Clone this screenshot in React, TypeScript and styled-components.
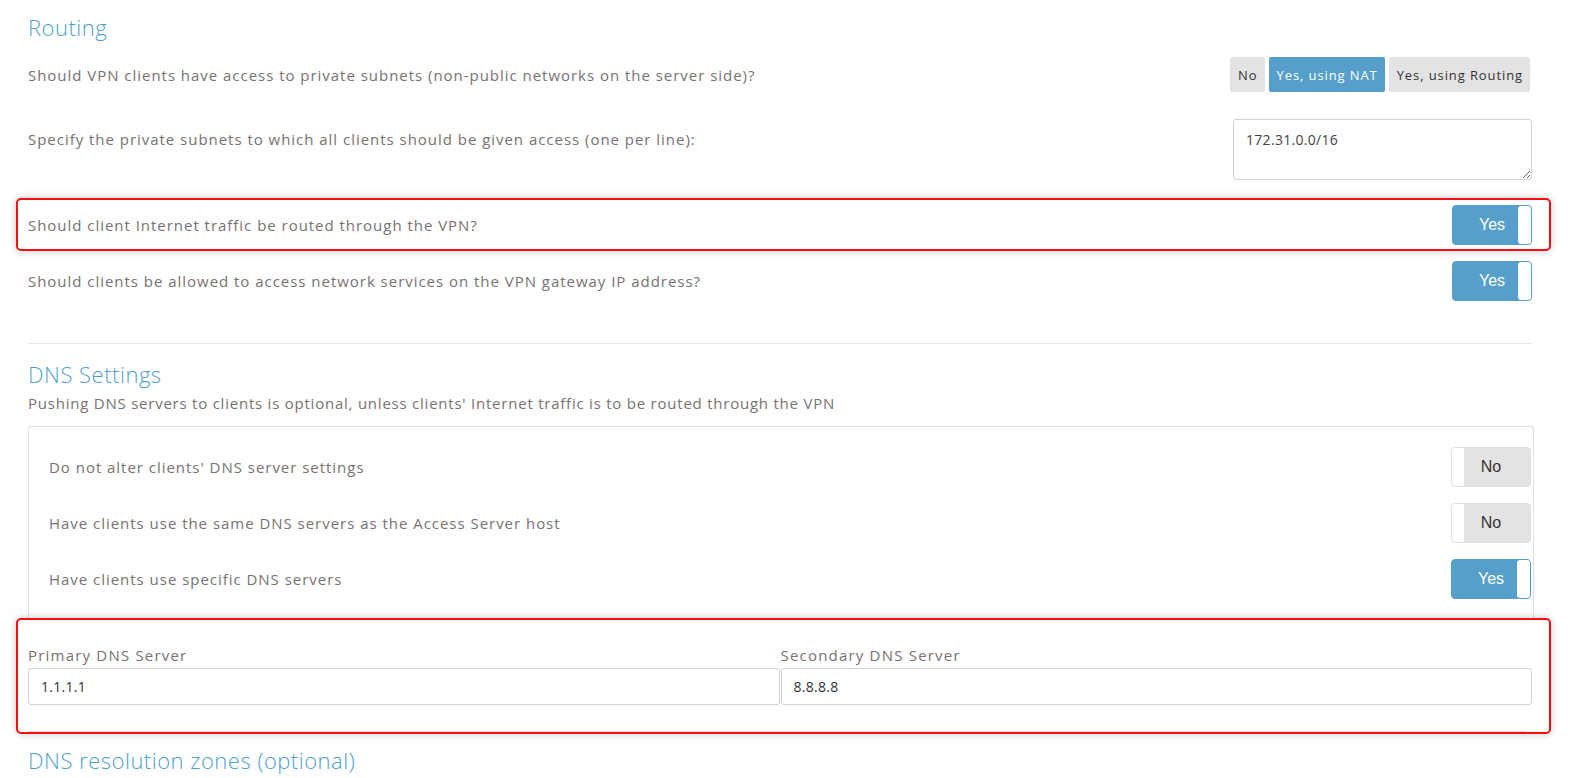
import React from "react";
import styled, { createGlobalStyle, css } from "styled-components";

const GlobalStyle = createGlobalStyle`
  html, body { margin: 0; padding: 0; background: #fff; }
  body { font-family: "Open Sans", "Noto Sans", sans-serif; color: #787272; }
  * { box-sizing: border-box; }
`;

const Page = styled.div`
  padding: 0 39px 0 28px;
  width: 1571px;
`;

const SectionTitle = styled.h2<{ $mt?: number }>`
  margin: ${(p) => p.$mt ?? 0}px 0 0;
  font-size: 22px;
  font-weight: 300;
  line-height: 30px;
  color: #4f9fd2;
  letter-spacing: 0.5px;
`;

const Subtitle = styled.p`
  margin: 4px 0 0;
  font-size: 15px;
  line-height: 20px;
  color: #787272;
  letter-spacing: 0.77px;
`;

const Row = styled.div<{ $mt: number; $top?: boolean }>`
  display: flex;
  justify-content: space-between;
  align-items: ${(p) => (p.$top ? "flex-start" : "center")};
  margin-top: ${(p) => p.$mt}px;
  min-height: 35px;
`;

const Label = styled.span<{ $pt?: number }>`
  font-size: 15px;
  line-height: 20px;
  letter-spacing: 0.97px;
  color: #787272;
  padding-top: ${(p) => p.$pt ?? 0}px;
`;

const Highlight = styled.div<{ $t: number; $b: number }>`
  position: relative;
  isolation: isolate;
  &::before {
    content: "";
    position: absolute;
    top: ${(p) => -p.$t}px;
    bottom: ${(p) => -p.$b}px;
    left: -12px;
    right: -19px;
    border: 2px solid #f31010;
    border-radius: 5px;
    background: #fff;
    box-shadow: 0 0 9px rgba(0, 0, 0, 0.22);
    z-index: -1;
  }
`;

const Segmented = styled.div`
  display: flex;
  gap: 4px;
  margin-right: 2px;
`;

const SegButton = styled.button<{ $active?: boolean }>`
  height: 35px;
  padding: 0 7px 0 8px;
  border: none;
  border-radius: 2px;
  font-family: inherit;
  font-size: 13px;
  letter-spacing: 0.9px;
  background: ${(p) => (p.$active ? "#559fca" : "#e3e3e3")};
  color: ${(p) => (p.$active ? "#fff" : "#333")};
  cursor: pointer;
`;

const TextArea = styled.textarea`
  width: 299px;
  height: 61px;
  border: 1px solid #cdd1d8;
  border-radius: 3px;
  padding: 10px 12px;
  font-family: inherit;
  font-size: 14px;
  letter-spacing: 0.3px;
  color: #444;
  resize: both;
  outline: none;
`;

const Toggle = styled.div<{ $on: boolean }>`
  position: relative;
  width: 80px;
  height: 40px;
  border-radius: 4px;
  border: 1px solid ${(p) => (p.$on ? "#559fca" : "#e0e0e0")};
  background: ${(p) => (p.$on ? "#559fca" : "#e3e3e3")};
  display: flex;
  align-items: center;
  justify-content: center;
  font-family: "Liberation Sans", Arial, sans-serif;
  font-size: 16px;
  color: ${(p) => (p.$on ? "#fff" : "#333")};
  flex-shrink: 0;
`;

const Handle = styled.span<{ $on: boolean }>`
  position: absolute;
  top: 0;
  bottom: 0;
  width: 13px;
  background: #fff;
  border-radius: 3px;
  ${(p) =>
    p.$on
      ? css`
          right: 0;
        `
      : css`
          left: 0;
          border-right: 1px solid #e6e6e6;
        `}
`;

const Divider = styled.hr`
  margin: 42px 0 0;
  border: none;
  border-top: 1px solid #e3e3e3;
`;

const Panel = styled.div`
  margin-top: 13px;
  border: 1px solid #e0e0e0;
  border-bottom: none;
  border-radius: 3px 3px 0 0;
  margin-right: -2px;
  padding: 20px 2px 19px 20px;
  display: flex;
  flex-direction: column;
  gap: 16px;
`;

const PanelRow = styled.div`
  display: flex;
  justify-content: space-between;
  align-items: center;
  height: 40px;
`;

const Fields = styled.div`
  display: grid;
  grid-template-columns: 1fr 1fr;
  gap: 1px;
  padding-top: 27px;
`;

const Field = styled.label`
  display: flex;
  flex-direction: column;
  gap: 3px;
`;

const FieldLabel = styled.span`
  font-size: 15px;
  line-height: 20px;
  letter-spacing: 1.2px;
  color: #787272;
`;

const Input = styled.input`
  height: 37px;
  border: 1px solid #cdd1d8;
  border-radius: 3px;
  padding: 0 12px;
  font-family: inherit;
  font-size: 14px;
  letter-spacing: 0.3px;
  color: #333;
  outline: none;
  width: 100%;
`;

const FieldsRule = styled.div`
  margin: 26px 5px 0 0;
  border-top: 1px solid #d8d8d8;
`;

function ToggleSwitch({ on }: { on: boolean }) {
  return (
    <Toggle $on={on}>
      {on ? "Yes" : "No"}
      <Handle $on={on} />
    </Toggle>
  );
}

export default function App() {
  return (
    <>
      <GlobalStyle />
      <Page>
        <SectionTitle $mt={12}>Routing</SectionTitle>
        <Row $mt={15}>
          <Label>Should VPN clients have access to private subnets (non-public networks on the server side)?</Label>
          <Segmented>
            <SegButton>No</SegButton>
            <SegButton $active>Yes, using NAT</SegButton>
            <SegButton>Yes, using Routing</SegButton>
          </Segmented>
        </Row>
        <Row $mt={27} $top>
          <Label $pt={10}>Specify the private subnets to which all clients should be given access (one per line):</Label>
          <TextArea defaultValue="172.31.0.0/16" />
        </Row>
        <Highlight $t={7} $b={6} style={{ marginTop: 25 }}>
          <Row $mt={0}>
            <Label>Should client Internet traffic be routed through the VPN?</Label>
            <ToggleSwitch on />
          </Row>
        </Highlight>
        <Row $mt={16}>
          <Label>Should clients be allowed to access network services on the VPN gateway IP address?</Label>
          <ToggleSwitch on />
        </Row>
        <Divider />
        <SectionTitle $mt={15}>DNS Settings</SectionTitle>
        <Subtitle>Pushing DNS servers to clients is optional, unless clients' Internet traffic is to be routed through the VPN</Subtitle>
        <Panel>
          <PanelRow>
            <Label>Do not alter clients' DNS server settings</Label>
            <ToggleSwitch on={false} />
          </PanelRow>
          <PanelRow>
            <Label>Have clients use the same DNS servers as the Access Server host</Label>
            <ToggleSwitch on={false} />
          </PanelRow>
          <PanelRow>
            <Label>Have clients use specific DNS servers</Label>
            <ToggleSwitch on />
          </PanelRow>
        </Panel>
        <Highlight $t={0} $b={2}>
          <Fields>
            <Field>
              <FieldLabel>Primary DNS Server</FieldLabel>
              <Input defaultValue="1.1.1.1" />
            </Field>
            <Field>
              <FieldLabel>Secondary DNS Server</FieldLabel>
              <Input defaultValue="8.8.8.8" />
            </Field>
          </Fields>
          <FieldsRule />
        </Highlight>
        <SectionTitle $mt={13}>DNS resolution zones (optional)</SectionTitle>
      </Page>
    </>
  );
}
